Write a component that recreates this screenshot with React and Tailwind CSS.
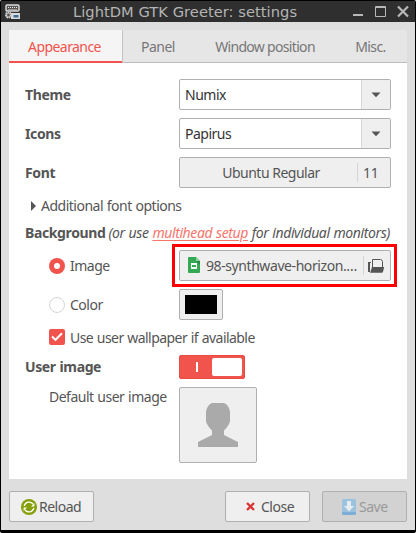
import { useState } from "react";

const tabs = [
  { name: "Appearance", className: "w-[113px] pr-[2px] tracking-[-0.57px]" },
  { name: "Panel", className: "w-[72px] tracking-[-0.5px]" },
  { name: "Window position", className: "w-[140px] pl-[2px] tracking-[-0.68px]" },
  { name: "Misc.", className: "w-[73px] tracking-[-0.6px]" },
];

const AppIcon = () => (
  <svg className="ml-[3px] shrink-0" width="17" height="17" viewBox="0 0 17 17">
    <rect x="2" y="2" width="13" height="6" rx="1" fill="#555" stroke="#dcdcdc" strokeWidth="1.4" />
    <path d="M4 4.5h9" stroke="#eee" strokeDasharray="1 1" />
    <path d="M4 6.5h9" stroke="#999" />
    <rect x="7" y="10" width="9" height="6" fill="#dcdcdc" />
    <rect x="9.500" y="12" width="5" height="2.5" fill="#3c6c98" />
    <circle cx="4.5" cy="12" r="2.6" fill="#999" stroke="#ccc" strokeWidth="2" strokeDasharray="1.6 .6" />
    <circle cx="4.5" cy="12" r="1.2" fill="#555" />
  </svg>
);

const Arrow = () => (
  <svg width="10" height="6" viewBox="0 0 10 6">
    <path d="M0.5 .5h9L5 5.2z" fill="#555" />
  </svg>
);

const ComboBox = ({ value }) => (
  <button className="flex h-[31px] w-[212px] rounded-[2px] border border-[#b0b0b0] bg-white text-left text-[#333]">
    <span className="h-full flex-1 pl-[5px] leading-[30px]">{value}</span>
    <span className="flex h-full w-[29px] items-center justify-center border-l border-[#d8d8d8] bg-[#efefef]">
      <Arrow />
    </span>
  </button>
);

const SheetIcon = () => (
  <svg className="-mt-px ml-2 shrink-0" width="12" height="16" viewBox="0 0 12 16">
    <path d="M1 0h7l4 4v11a1 1 0 0 1-1 1H1a1 1 0 0 1-1-1V1a1 1 0 0 1 1-1z" fill="#35a853" />
    <path d="M8 0l4 4H8z" fill="#8ed1a5" />
    <path d="M8 4h4v4z" fill="#2b8a45" />
    <path d="M3 6h6v6H3zM4 8v2h4V8z" fill="#fff" fillRule="evenodd" />
  </svg>
);

const FolderIcon = () => (
  <svg className="ml-[4px]" width="17" height="14" viewBox="0 0 17 14">
    <path d="M4.5 8V.5h8q1.5 0 2 2V8" fill="none" stroke="#555" />
    <path d="M0 3h3v1H2v9H0z" fill="#555" />
    <path d="M4 8h12.2l-1.2 4.7q-.2 1-1.2 1H1.3q.9-.2 1.2-1z" fill="#555" />
  </svg>
);

const ReloadIcon = () => (
  <svg width="16" height="16" viewBox="0 0 16 16">
    <circle cx="8" cy="8" r="8" fill="#859f08" />
    <path d="M3.2 7A5 5 0 0 1 12 5M12.8 9A5 5 0 0 1 4 11" fill="none" stroke="#fff" strokeWidth="1.3" />
    <path d="M13.4 4v3.6H10zM2.6 12V8.400H6z" fill="#fff" />
  </svg>
);

const SaveIcon = () => (
  <svg width="14" height="16" viewBox="0 0 14 16">
    <rect width="14" height="16" rx="1.5" fill="#9bc3df" />
    <path d="M0 13h14v1.5a1.5 1.5 0 0 1-1.5 1.5h-11A1.5 1.5 0 0 1 0 14.5z" fill="#7eaed6" />
    <path d="M5 2h4v5h3l-5 5.5L2 7h3z" fill="#e6edf1" />
  </svg>
);

const App = () => {
  const [activeTab, setActiveTab] = useState("Appearance");
  const [background, setBackground] = useState("image");
  const [useWallpaper, setUseWallpaper] = useState(true);

  return (
    <div className="h-[533px] w-[416px] overflow-hidden bg-white font-['Noto_Sans','Open_Sans',sans-serif] text-[14px] tracking-[-0.5px] [word-spacing:0.6px] whitespace-nowrap text-[#555]">
      <div className="flex h-[533px] flex-col rounded-[2px] border border-b-[3px] border-black bg-[#dedede]">
        {/* Title bar */}
        <header className="flex h-[21px] shrink-0 items-center bg-[#2f2f2f] text-[#b4b4b4]">
          <AppIcon />
          <h1 className="ml-[52px] w-[225px] font-['DejaVu_Sans',sans-serif] text-[14.67px] leading-[20px] tracking-[0.04px] [word-spacing:0px]">LightDM GTK Greeter: settings</h1>
          <svg className="-mt-px ml-[55px]" width="57" height="13" viewBox="0 0 57 13" fill="none" stroke="#b8b8b8">
            <path d="M0 10h10" strokeWidth="2" />
            <path d="M22.5 1.5h10v10h-10zM22 2.5h11" />
            <path d="M45 1.5l10 10M55 1.5l-10 10" strokeWidth="2.2" />
          </svg>
        </header>

        <main className="mx-2 mt-2 flex h-[449px] shrink-0 flex-col bg-white">
          <nav className="flex h-[33px] shrink-0 bg-[#e6e6e6] text-[#777]">
            {tabs.map((tab) => (
              <button
                key={tab.name}
                onClick={() => setActiveTab(tab.name)}
                className={`${tab.className} h-[33px] ${activeTab === tab.name ? "border-b-2 border-[#f0544c] bg-[#f5f5f5] pt-px text-[#f0544c] shadow-[1px_0_0_#c4c4c4]" : "border-b border-[#bdbdbd]"}`}
              >
                {tab.name}
              </button>
            ))}
          </nav>

          <div className="flex flex-col pt-4 pl-4">
            <div className="flex h-[39px]">
              <label className="w-[154px] font-bold leading-[31px] tracking-[-0.35px]">Theme</label>
              <ComboBox value="Numix" />
            </div>
            <div className="flex h-[39px]">
              <label className="w-[154px] font-bold leading-[31px] tracking-[-0.35px]">Icons</label>
              <ComboBox value="Papirus" />
            </div>
            <div className="flex h-[39px]">
              <label className="w-[154px] font-bold leading-[31px] tracking-[-0.35px]">Font</label>
              <button className="flex h-[31px] w-[212px] items-center rounded-[2px] border border-[#b0b0b0] bg-[#efefef]">
                <span className="flex-1 pl-[5px] text-center">Ubuntu Regular</span>
                <span className="flex h-[19px] w-[33px] items-center border-l border-[#d5d5d5] pl-[5px] tracking-[-0.2px]">11</span>
              </button>
            </div>

            <div className="flex h-5 items-center">
              <svg className="-mt-px ml-[6px]" width="5" height="10" viewBox="0 0 5 10">
                <path d="M0 0l5 5-5 5z" fill="#555" />
              </svg>
              <span className="ml-[5px] -mt-px">Additional font options</span>
            </div>

            <p className="mt-[6px] mb-px flex h-5 items-center">
              <b className="tracking-[-0.38px]">Background</b>
              <i className="ml-[3px] tracking-[-0.4px]">
                (or use <a className="text-[#f8756c] underline underline-offset-2">multihead setup</a> for individual monitors)
              </i>
            </p>

            <div className="mt-px flex h-[43px]">
              <label className="flex w-[147px] items-center pl-[24px]" onClick={() => setBackground("image")}>
                <span className={`mr-[5px] flex h-4 w-4 items-center justify-center rounded-full ${background === "image" ? "bg-[#f0544c]" : "border border-[#d5d5d5] bg-white"}`}>
                  <span className="h-[6px] w-[6px] rounded-full bg-white" />
                </span>
                <span>Image</span>
              </label>
              <div className="h-[43px] w-[225px] border-[3px] border-[#fe0000] p-[3px] pl-[4px]">
                <button className="flex h-[31px] w-[212px] items-center rounded-[2px] border border-[#b0b0b0] bg-[#efefef]">
                  <SheetIcon />
                  <span className="ml-[6px] w-[157px] overflow-hidden text-left tracking-[-0.42px]">98-synthwave-horizon.…</span>
                  <span className="flex h-[19px] items-center border-l border-[#d5d5d5]">
                    <FolderIcon />
                  </span>
                </button>
              </div>
            </div>

            <div className="mt-[2px] flex h-[31px]">
              <label className="flex w-[154px] items-center pl-[24px]" onClick={() => setBackground("color")}>
                <span className={`mr-[5px] flex h-4 w-4 items-center justify-center rounded-full ${background === "color" ? "bg-[#f0544c]" : "border border-[#d5d5d5] bg-white"}`}>
                  <span className="h-[6px] w-[6px] rounded-full bg-white" />
                </span>
                <span>Color</span>
              </label>
              <button className="flex h-[31px] w-[44px] items-center justify-center rounded-[2px] border border-[#b0b0b0] bg-[#efefef]">
                <span className="h-[19px] w-8 bg-black" />
              </button>
            </div>

            <label className="mt-2 flex h-[18px] items-center pl-[24px]" onClick={() => setUseWallpaper(!useWallpaper)}>
              <span className="mr-[5px] flex h-4 w-4 items-center justify-center rounded-[2px] bg-[#f0544c]">
                {useWallpaper && (
                  <svg width="12" height="10" viewBox="0 0 12 10">
                    <path d="M1 4.5l3.5 3.3L11 1.3" fill="none" stroke="#fff" strokeWidth="2" />
                  </svg>
                )}
              </span>
              <span className="tracking-[-0.56px]">Use user wallpaper if available</span>
            </label>

            <div className="mt-[9px] flex h-6">
              <label className="w-[154px] font-bold leading-6 tracking-[-0.38px]">User image</label>
              <button className="flex h-6 w-[66px] items-center rounded-[2px] border border-[#e94b43] bg-[#f0544c]">
                <span className="ml-4 h-[10px] w-[2px] bg-white" />
                <span className="ml-[14px] h-[18px] w-[30px] rounded-[2px] bg-white" />
              </button>
            </div>

            <div className="mt-2 flex">
              <span className="w-[154px] pl-6 leading-5">Default user image</span>
              <button className="flex h-[76px] w-[78px] items-center justify-center rounded-[2px] border border-[#b0b0b0] bg-[#efefef]">
                <svg width="40" height="44" viewBox="0 0 40 44">
                  <path d="M14 0h12q5 2 6 9v9q-.5 4-6 9.500v4.500l14 7v5H0v-5l14-7v-4.500q-5.500-5.500-6-9.500V9q1-7 6-9z" fill="#aaa" />
                </svg>
              </button>
            </div>
          </div>
        </main>

        <footer className="mx-2 mt-3 flex h-[31px] shrink-0">
          <button className="flex w-[85px] items-center rounded-[2px] border border-[#b0b0b0] bg-[#efefef] pl-[11px]">
            <ReloadIcon />
            <span className="ml-[2px]">Reload</span>
          </button>
          <button className="ml-auto flex w-[85px] items-center rounded-[2px] border border-[#b0b0b0] bg-[#efefef] pl-5">
            <svg width="9" height="9" viewBox="0 0 9 9">
              <path d="M1 1l7 7M8 1L1 8" stroke="#d93636" strokeWidth="2.4" />
            </svg>
            <span className="ml-[6px]">Close</span>
          </button>
          <button className="ml-3 flex w-[85px] items-center rounded-[2px] border border-[#b0b0b0] bg-[#d2d2d2] pl-[19px] text-[#999]">
            <SaveIcon />
            <span className="ml-[3px]">Save</span>
          </button>
        </footer>
      </div>
    </div>
  );
};

export default App;
